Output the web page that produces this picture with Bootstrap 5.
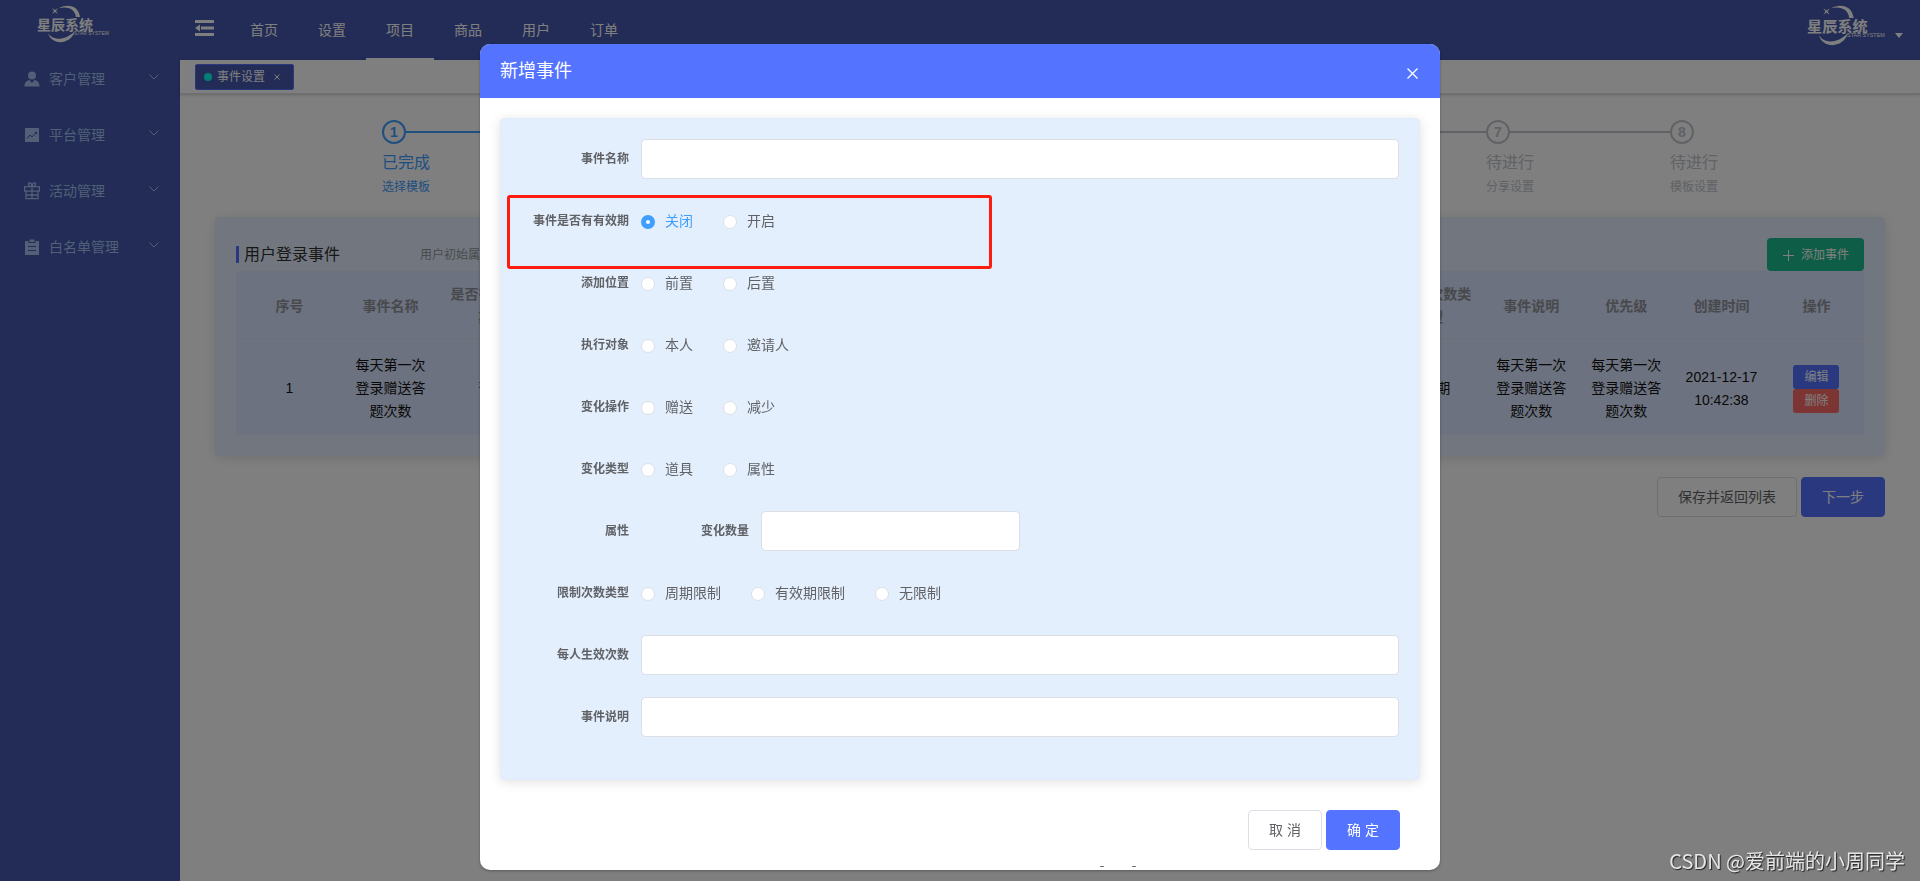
<!DOCTYPE html>
<html lang="zh-CN">
<head>
<meta charset="utf-8">
<meta name="viewport" content="width=device-width, initial-scale=1">
<title>事件设置</title>
<link href="https://cdn.jsdelivr.net/npm/bootstrap@5.3.0/dist/css/bootstrap.min.css" rel="stylesheet">
<style>
:root{--navy:#4458ac;--primary:#5473ff;--panel:#e4effe;--line:#dcdfe6;--done:#409eff;--wait:#c0c4cc}
body{font-family:"Liberation Sans","Noto Sans CJK SC",sans-serif;font-size:14px;line-height:20px;color:#606266;background:#fff}
.side{width:180px;background:var(--navy)}
.side .brand{height:51px;padding:5px 0 0 37px}
.logo{overflow:visible}
.side .nav-link{height:56px;padding:0 21px 0 24px;color:#a2bfee;display:flex;align-items:center}
.side .nav-link span{margin-left:9px}
.side .nav-link .chev{margin:0 0 4px auto}
.topbar{height:60px;background:var(--navy);padding:0 17px 0 15px}
.topbar .nav-link{height:60px;width:68px;padding:0;line-height:60px;text-align:center;color:#fff;border-bottom:2px solid transparent}
.topbar .nav-link.active{border-color:#fff}
.bare{border:0;background:none;padding:0;line-height:0;color:#fff}
.userbox{color:#fff;padding-top:5px}
.userbox::after{margin:28px 0 0 10px;border-top-width:5px;border-left-width:4px;border-right-width:4px}
.tabs{height:34px;padding:4px 15px;border-bottom:1px solid #d8dce5;box-shadow:0 1px 3px rgba(0,0,0,.2)}
.tagtab{height:26px;padding:0 13px 0 8px;font-size:12px;color:#fff;background:var(--navy);border:1px solid var(--primary);border-radius:2px}
.tagtab i{width:8px;height:8px;border-radius:50%;background:#00ffec;margin-right:5px}
.tagtab button{margin-left:9px}
.main-pad{padding:26px 35px 0}
.steps{margin:0 167px;height:97px}
.step{position:relative;flex:1 1 0;min-width:0}
.step:last-child{flex:none}
.step .rail{position:absolute;left:0;right:0;top:11px;height:2px;background:currentColor}
.step .dot{position:relative;width:24px;height:24px;border:2px solid;border-radius:50%;background:#fff;font-weight:700;line-height:20px;text-align:center}
.step .t{font-size:16px;line-height:24px;margin-top:7px;white-space:nowrap}
.step .d{font-size:12px;line-height:20px;margin-top:2px;white-space:nowrap}
.done{color:var(--done)}.wait{color:var(--wait)}
.panel{background:var(--panel);border:1px solid #e2ecfa;border-radius:4px;box-shadow:0 2px 12px rgba(0,0,0,.12);padding:20px}
.panel-title{border-left:3px solid var(--primary);padding-left:5px;font-size:16px;line-height:17px;color:#303133;width:184px}
.note{font-size:12px;color:#909399}
.btn{--bs-btn-border-radius:4px;--bs-btn-font-size:14px;line-height:20px}
.btn-tall{height:40px;padding:9px 20px}
.btn-blue,.btn-blue:hover{background:var(--primary);border-color:var(--primary);color:#fff}
.btn-plain,.btn-plain:hover{background:#fff;border-color:var(--line);color:#606266}
.btn-green{background:#1cbb8c;color:#fff;font-size:12px;height:33px;padding:0 15px 0 16px;border:0}
.btn-mini{font-size:12px;width:46px;height:24px;padding:0;border:0;border-radius:3px;display:block;margin:0 auto;color:#fff}
.btn-red{background:#f96a64}
.grid-table{table-layout:fixed;width:100%;text-align:center;line-height:23px;background:#d9e4fe;color:#111}
.grid-table th,.grid-table td{padding:12px;vertical-align:middle}
.grid-table td{padding:12px 10px}
.grid-table th{color:#909399;font-weight:700;border-bottom:1px solid #e4ebf8}
.grid-table .c1{width:107px}
.grid-table th:nth-child(3){padding:12px 12px}
.page-actions{padding-top:21px}
.modal-dialog{width:50%;max-width:none;margin:5vh auto 0}
.modal-content{border:0;border-radius:10px;box-shadow:0 1px 3px rgba(0,0,0,.3);overflow:hidden;color:#606266}
.modal-header{height:54px;padding:0 20px;background:var(--primary);color:#fff;border:0;border-radius:0}
.modal-header h1{font-size:18px;line-height:24px;margin:0;font-weight:400}
.modal-header .bare{margin-right:2px}
.modal-body{padding:20px}
.modal-footer{padding:10px 40px 20px;border:0;gap:4px}
.modal-footer>*{margin:0}
.modal-footer .btn{width:74px;padding:9px 0}
.fitem{display:flex;align-items:center;min-height:40px;margin-bottom:22px}
.flabel{width:120px;padding-right:12px;text-align:right;font-size:12px;font-weight:700;flex:none}
.fitem .form-control{height:40px;border:1px solid var(--line);border-radius:4px;font-size:14px}
.half{width:50%}
.half .fitem{margin-bottom:0}
.choice{display:flex;align-items:center;margin-right:30px}
.choice .form-check-input{width:14px;height:14px;margin:2px 0 0;border:1px solid var(--line);flex:none}
.choice .form-check-input:checked{border:5px solid var(--done);background:#fff}
.choice label{padding-left:10px}
.choice input:checked+label{color:var(--done)}
.ring{position:relative}
.ring::after{content:"";position:absolute;left:-14px;top:-6px;width:485px;max-width:100%;height:74px;border:3px solid #fe1c10;border-radius:3px;pointer-events:none}
.sign{position:fixed;right:15px;bottom:6px;z-index:2000;font:20px/28px "Noto Sans CJK SC",sans-serif;color:#e6e6e6;text-shadow:1px 1px 1px #222}
.specks{position:absolute;left:620px;bottom:3px;gap:28px}
.specks i{width:4px;height:1px;background:#777}
</style>
</head>
<body>
<svg width="0" height="0" class="position-absolute">
  <symbol id="chev" viewBox="0 0 10 6"><path d="M.5.5 5 5 9.500.5" fill="none" stroke="currentColor"/></symbol>
</svg>

<div class="d-flex min-vh-100">
  <aside class="side flex-shrink-0">
    <div class="brand"><svg width="72" height="37" viewBox="0 0 72 37" class="logo d-block" fill="#fff">
      <path d="M22 3C31-2 42 1 43 12l-4 0C38 4 31 1 22 3Z"/>
      <path d="M11 28C15 35 27 37 38 26C33 41 14 40 11 28Z"/>
      <path d="M15 3l3 2 3-2-2 3 2 3-3-2-3 2 2-3Z"/>
      <text x="0" y="25" font-size="14" font-weight="700" font-family="Noto Sans CJK SC, sans-serif">星辰系统</text>
      <text x="37" y="30" font-size="5" font-family="Liberation Sans, sans-serif">STAR SYSTEM</text>
    </svg></div>
    <nav class="nav flex-column flex-nowrap">
      <a class="nav-link" href="#"><svg width="16" height="16" viewBox="0 0 16 16" fill="currentColor"><circle cx="8" cy="4.500" r="4"/><path d="M.5 15.500c0-4 2-6 5-6.500L8 12l2.500-3c3 .5 5 2.500 5 6.500Z"/></svg><span>客户管理</span><svg class="chev" width="10" height="6"><use href="#chev"/></svg></a>
      <a class="nav-link" href="#"><svg width="16" height="16" viewBox="0 0 16 16"><path d="M1 1h14v14H1Z" fill="currentColor"/><path d="M3 11.500l3-3.500 2 2 4-4" fill="none" stroke="#4458ac"/><path d="M10.500 5H13v2.500Z" fill="#4458ac"/></svg><span>平台管理</span><svg class="chev" width="10" height="6"><use href="#chev"/></svg></a>
      <a class="nav-link" href="#"><svg width="16" height="18" viewBox="0 0 16 18" fill="none" stroke="currentColor" stroke-width="1.300"><path d="M.7 4.700h14.600v4.500H.7ZM2 9.200v7.500h12V9.200M8 4.700v12M2 13h12M8 4.500C4 4.500 3.500 1 5.500 1S8 3 8 4.500C8 3 8.500 1 10.500 1S12 4.500 8 4.500Z"/></svg><span>活动管理</span><svg class="chev" width="10" height="6"><use href="#chev"/></svg></a>
      <a class="nav-link" href="#"><svg width="16" height="16" viewBox="0 0 16 16"><path d="M1 2h3.500v2h7V2H15v14H1ZM5.500.5h5V3h-5Z" fill="currentColor"/><path d="M4 7.500h8M4 11.500h8" stroke="#4458ac" stroke-width="1.200"/></svg><span>白名单管理</span><svg class="chev" width="10" height="6"><use href="#chev"/></svg></a>
    </nav>
  </aside>

  <div class="flex-grow-1">
    <header class="topbar d-flex align-items-start">
      <button class="bare mt-3 pt-1 me-3" type="button" aria-label="折叠菜单"><svg width="19" height="16" viewBox="0 0 19 16" fill="#fff"><path d="M0 0h19v3H0ZM6 6.500h13v3H6ZM0 13h19v3H0ZM0 8l5-3.500v7Z"/></svg></button>
      <nav class="nav">
        <a class="nav-link" href="#">首页</a>
        <a class="nav-link" href="#">设置</a>
        <a class="nav-link active" href="#">项目</a>
        <a class="nav-link" href="#">商品</a>
        <a class="nav-link" href="#">用户</a>
        <a class="nav-link" href="#">订单</a>
      </nav>
      <a class="userbox dropdown-toggle d-flex ms-auto" href="#" aria-label="账户"><svg class="logo" width="78" height="40" viewBox="0 0 72 37" fill="#fff">
        <path d="M22 3C31-2 42 1 43 12l-4 0C38 4 31 1 22 3Z"/>
        <path d="M11 28C15 35 27 37 38 26C33 41 14 40 11 28Z"/>
        <path d="M15 3l3 2 3-2-2 3 2 3-3-2-3 2 2-3Z"/>
        <text x="0" y="25" font-size="14" font-weight="700" font-family="Noto Sans CJK SC, sans-serif">星辰系统</text>
        <text x="37" y="30" font-size="5" font-family="Liberation Sans, sans-serif">STAR SYSTEM</text>
      </svg></a>
    </header>

    <div class="tabs d-flex">
      <div class="tagtab d-flex align-items-center"><i></i>事件设置<button class="bare" type="button" aria-label="关闭标签"><svg width="6" height="6" viewBox="0 0 6 6" stroke="#fff" fill="none"><path d="M.5.5l5 5M5.500.5l-5 5"/></svg></button></div>
    </div>

    <main class="main-pad">
      <div class="steps d-flex">
        <div class="step done"><div class="rail"></div><div class="dot">1</div><div class="t">已完成</div><div class="d">选择模板</div></div>
        <div class="step done"><div class="rail"></div></div>
        <div class="step wait"><div class="rail"></div></div>
        <div class="step wait"><div class="rail"></div></div>
        <div class="step wait"><div class="rail"></div></div>
        <div class="step wait"><div class="rail"></div></div>
        <div class="step wait"><div class="rail"></div><div class="dot">7</div><div class="t">待进行</div><div class="d">分享设置</div></div>
        <div class="step wait"><div class="dot">8</div><div class="t">待进行</div><div class="d">模板设置</div></div>
      </div>

      <section class="panel">
        <div class="d-flex align-items-center">
          <div class="panel-title">用户登录事件</div>
          <div class="note">用户初始属</div>
          <button class="btn btn-green ms-auto" type="button"><svg class="me-1" width="11" height="11" viewBox="0 0 11 11" stroke="#fff"><path d="M5.500 0v11M0 5.500h11"/></svg> 添加事件</button>
        </div>
        <table class="grid-table">
          <colgroup><col class="c1"><col span="16"></colgroup>
          <thead><tr><th>序号</th><th>事件名称</th><th>是否有有效期</th><th colspan="9"></th><th>限制次数类型</th><th>事件说明</th><th>优先级</th><th>创建时间</th><th>操作</th></tr></thead>
          <tbody><tr><td>1</td><td>每天第一次登录赠送答题次数</td><td>否</td><td colspan="9"></td><td>周期</td><td>每天第一次登录赠送答题次数</td><td>每天第一次登录赠送答题次数</td><td>2021-12-17 10:42:38</td>
            <td><button class="btn btn-mini btn-blue" type="button">编辑</button><button class="btn btn-mini btn-red" type="button">删除</button></td></tr></tbody>
        </table>
      </section>

      <div class="page-actions d-flex justify-content-end gap-1">
        <button class="btn btn-tall btn-plain" type="button">保存并返回列表</button>
        <button class="btn btn-tall btn-blue" type="button">下一步</button>
      </div>
    </main>
  </div>
</div>

<div class="modal-backdrop show"></div>
<div class="modal show d-block" role="dialog" aria-labelledby="dlgTitle">
  <div class="modal-dialog">
    <form class="modal-content">
      <div class="modal-header d-flex justify-content-between align-items-center">
        <h1 id="dlgTitle">新增事件</h1>
        <button class="bare pt-1" type="button" aria-label="关闭"><svg width="11" height="11" viewBox="0 0 11 11" fill="none" stroke="#fff" stroke-width="1.300"><path d="M.5.5l10 10M10.500.5l-10 10"/></svg></button>
      </div>
      <div class="modal-body">
        <div class="panel">
          <div class="fitem"><label class="flabel" for="name">事件名称</label><input class="form-control" id="name"></div>
          <div class="fitem ring"><span class="flabel">事件是否有有效期</span>
            <div class="choice"><input class="form-check-input" type="radio" name="valid" id="v1" checked><label for="v1">关闭</label></div>
            <div class="choice"><input class="form-check-input" type="radio" name="valid" id="v2"><label for="v2">开启</label></div></div>
          <div class="fitem"><span class="flabel">添加位置</span>
            <div class="choice"><input class="form-check-input" type="radio" name="pos" id="p1"><label for="p1">前置</label></div>
            <div class="choice"><input class="form-check-input" type="radio" name="pos" id="p2"><label for="p2">后置</label></div></div>
          <div class="fitem"><span class="flabel">执行对象</span>
            <div class="choice"><input class="form-check-input" type="radio" name="who" id="w1"><label for="w1">本人</label></div>
            <div class="choice"><input class="form-check-input" type="radio" name="who" id="w2"><label for="w2">邀请人</label></div></div>
          <div class="fitem"><span class="flabel">变化操作</span>
            <div class="choice"><input class="form-check-input" type="radio" name="op" id="o1"><label for="o1">赠送</label></div>
            <div class="choice"><input class="form-check-input" type="radio" name="op" id="o2"><label for="o2">减少</label></div></div>
          <div class="fitem"><span class="flabel">变化类型</span>
            <div class="choice"><input class="form-check-input" type="radio" name="kind" id="k1"><label for="k1">道具</label></div>
            <div class="choice"><input class="form-check-input" type="radio" name="kind" id="k2"><label for="k2">属性</label></div></div>
          <div class="fitem"><span class="flabel">属性</span>
            <div class="flex-grow-1"><div class="half"><div class="fitem"><label class="flabel" for="amount">变化数量</label><input class="form-control" id="amount"></div></div></div></div>
          <div class="fitem"><span class="flabel">限制次数类型</span>
            <div class="choice"><input class="form-check-input" type="radio" name="lim" id="l1"><label for="l1">周期限制</label></div>
            <div class="choice"><input class="form-check-input" type="radio" name="lim" id="l2"><label for="l2">有效期限制</label></div>
            <div class="choice"><input class="form-check-input" type="radio" name="lim" id="l3"><label for="l3">无限制</label></div></div>
          <div class="fitem"><label class="flabel" for="times">每人生效次数</label><input class="form-control" id="times"></div>
          <div class="fitem"><label class="flabel" for="desc">事件说明</label><input class="form-control" id="desc"></div>
        </div>
      </div>
      <div class="modal-footer">
        <button class="btn btn-tall btn-plain" type="button">取 消</button>
        <button class="btn btn-tall btn-blue" type="button">确 定</button>
        <div class="specks d-flex"><i></i><i></i></div>
      </div>
    </form>
  </div>
</div>
<div class="sign">CSDN @爱前端的小周同学</div>
<script src="https://cdn.jsdelivr.net/npm/bootstrap@5.3.0/dist/js/bootstrap.bundle.min.js"></script>
</body>
</html>
